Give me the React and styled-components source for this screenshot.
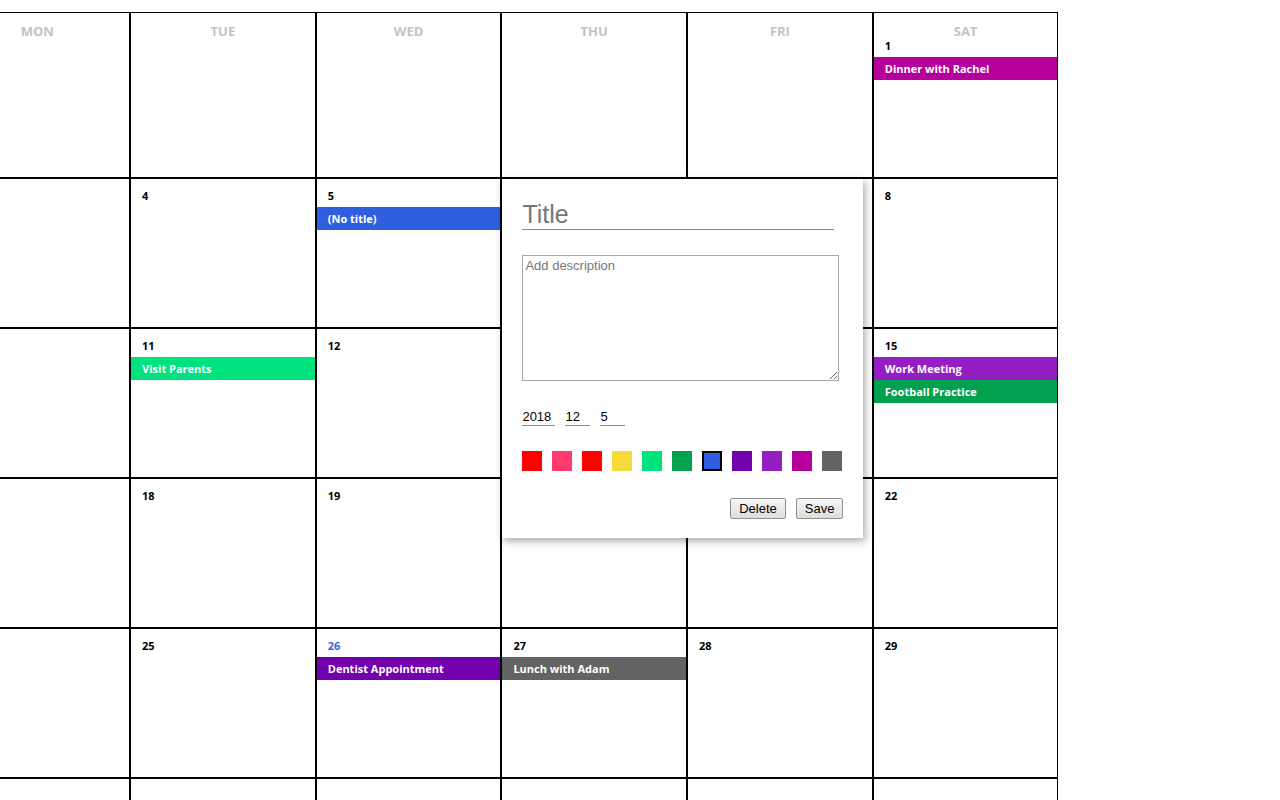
import React from 'react';
import styled, { createGlobalStyle } from 'styled-components';

const GlobalStyle = createGlobalStyle`
  html, body {
    margin: 0;
    padding: 0;
    overflow: hidden;
    background: #fff;
  }
  * { box-sizing: border-box; }
`;

const days = ['MON', 'TUE', 'WED', 'THU', 'FRI', 'SAT'];

const weeks = [
  [null, null, null, null, null, 1],
  [null, 4, 5, 6, 7, 8],
  [null, 11, 12, 13, 14, 15],
  [null, 18, 19, 20, 21, 22],
  [null, 25, 26, 27, 28, 29],
  [null, null, null, null, null, null],
];

const events = {
  1: [{ title: 'Dinner with Rachel', color: '#b5009c' }],
  5: [{ title: '(No title)', color: '#2f5fdf' }],
  11: [{ title: 'Visit Parents', color: '#00e27d' }],
  15: [
    { title: 'Work Meeting', color: '#931fc4' },
    { title: 'Football Practice', color: '#00a14f' },
  ],
  26: [{ title: 'Dentist Appointment', color: '#7200ad' }],
  27: [{ title: 'Lunch with Adam', color: '#636363' }],
};

const swatches = [
  '#ff0000', '#ff3a6c', '#ff0000', '#f5db3a', '#00e27d', '#00a14f',
  '#2f5fdf', '#7200ad', '#931fc4', '#b5009c', '#636363',
];

const TODAY = 26;
const EDITING = 6;

const Page = styled.div`
  padding-top: 12px;
  font-family: "Open Sans", "Noto Sans", sans-serif;
`;

const Grid = styled.div`
  display: grid;
  grid-template-columns: repeat(6, 1fr);
  width: 1114px;
  margin-left: -55.6px;
`;

const Cell = styled.div`
  position: relative;
  height: ${p => (p.$first ? 166 : 150)}px;
  border: 1px solid #000;
  padding-top: 10px;
`;

const DayLabel = styled.div`
  height: 16px;
  line-height: 16px;
  text-align: center;
  font-size: 13px;
  font-weight: 700;
  color: #c3c3c3;
`;

const DateNum = styled.div`
  height: 14px;
  line-height: 14px;
  padding-left: 11px;
  font-size: 11px;
  font-weight: 700;
  color: ${p => (p.$today ? '#3a63da' : '#000')};
`;

const EventList = styled.div`
  margin-top: 4px;
  display: flex;
  flex-direction: column;
`;

const EventBar = styled.div`
  height: 23px;
  line-height: 23px;
  padding-left: 11px;
  font-size: 11px;
  font-weight: 700;
  color: #fff;
  background: ${p => p.$color};
  white-space: nowrap;
  overflow: hidden;
`;

const Popup = styled.div`
  position: absolute;
  top: 0;
  left: 0;
  z-index: 5;
  width: 361px;
  height: 359px;
  background: #fff;
  box-shadow: 2px 3px 8px rgba(0, 0, 0, 0.35);
  padding: 20px 20px 0 20px;
  font-family: "Liberation Sans", Arial, sans-serif;
  display: flex;
  flex-direction: column;
`;

const TitleInput = styled.input`
  width: 312px;
  height: 31px;
  border: none;
  border-bottom: 1px solid #8a8a8a;
  padding: 0;
  font-family: "Liberation Sans", Arial, sans-serif;
  font-size: 25px;
  color: #333;
  outline: none;
  &::placeholder { color: #777; }
`;

const Description = styled.textarea`
  margin-top: 25px;
  width: 317px;
  height: 126px;
  border: 1px solid #a9a9a9;
  padding: 2px 2px;
  font-family: "Liberation Sans", Arial, sans-serif;
  font-size: 13px;
  resize: vertical;
  &::placeholder { color: #777; }
`;

const DateRow = styled.div`
  margin-top: 27px;
  display: flex;
  gap: 10px;
`;

const DateInput = styled.input`
  width: ${p => p.$w}px;
  height: 18px;
  border: none;
  border-bottom: 1px solid #8a8a8a;
  padding: 0;
  font-family: "Liberation Sans", Arial, sans-serif;
  font-size: 13px;
  color: #000;
  outline: none;
`;

const Swatches = styled.div`
  margin-top: 25px;
  display: flex;
  gap: 10px;
`;

const Swatch = styled.div`
  width: 20px;
  height: 20px;
  background: ${p => p.$color};
  border: ${p => (p.$selected ? '2px solid #000' : 'none')};
`;

const Actions = styled.div`
  margin-top: 27px;
  display: flex;
  justify-content: flex-end;
  gap: 10px;
`;

const Button = styled.button`
  height: 21px;
  padding: 0 8px;
  font-family: "Liberation Sans", Arial, sans-serif;
  font-size: 13px;
  color: #000;
  background: linear-gradient(#f6f6f6, #dedede);
  border: 1px solid #8f8f8f;
  border-radius: 2px;
`;

const EditPopup = () => (
  <Popup>
    <TitleInput placeholder="Title" />
    <Description placeholder="Add description" />
    <DateRow>
      <DateInput $w={33} defaultValue="2018" />
      <DateInput $w={25} defaultValue="12" />
      <DateInput $w={25} defaultValue="5" />
    </DateRow>
    <Swatches>
      {swatches.map((c, i) => (
        <Swatch key={i} $color={c} $selected={i === 6} />
      ))}
    </Swatches>
    <Actions>
      <Button>Delete</Button>
      <Button>Save</Button>
    </Actions>
  </Popup>
);

const App = () => {
  return (
    <Page>
      <GlobalStyle />
      <Grid>
        {weeks.map((week, wi) =>
          week.map((day, di) => (
            <Cell key={`${wi}-${di}`} $first={wi === 0}>
              {wi === 0 && <DayLabel>{days[di]}</DayLabel>}
              {day && <DateNum $today={day === TODAY}>{day}</DateNum>}
              {day && events[day] && (
                <EventList>
                  {events[day].map(e => (
                    <EventBar key={e.title} $color={e.color}>{e.title}</EventBar>
                  ))}
                </EventList>
              )}
              {day === EDITING && <EditPopup />}
            </Cell>
          ))
        )}
      </Grid>
    </Page>
  );
};

export default App;
